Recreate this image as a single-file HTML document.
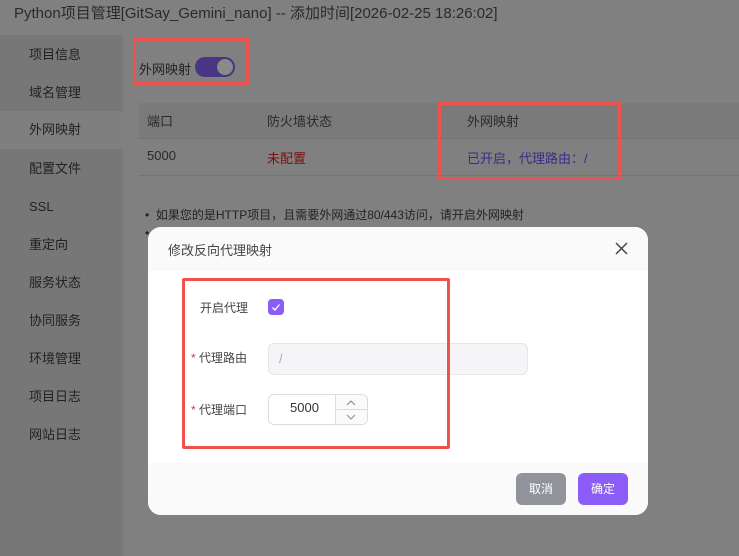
<!DOCTYPE html><html><head><meta charset="utf-8"><style>
*{box-sizing:border-box;margin:0;padding:0}
body{width:739px;height:556px;overflow:hidden;background:#808080;font-family:"Liberation Sans","Noto Sans CJK SC",sans-serif;font-size:12px;color:#333;position:relative}
.a{position:absolute}
.title{left:14px;top:2px;font-size:15px;color:#2a2a2a}
.side{left:0;top:35px;width:123px;height:521px;background:#777}
.si{position:absolute;left:0;width:123px;height:38px;line-height:38px;padding-left:29px;font-size:13px;color:#222}
.red{border:3px solid #f05050;border-radius:2px;position:absolute}
</style></head><body>
<div class="a title">Python项目管理[GitSay_Gemini_nano] -- 添加时间[2026-02-25 18:26:02]</div>
<div class="a side">
<div class="si" style="top:1px">项目信息</div>
<div class="si" style="top:39px">域名管理</div>
<div class="si" style="top:76px;background:#7f7f7f">外网映射</div>
<div class="si" style="top:115px">配置文件</div>
<div class="si" style="top:153px">SSL</div>
<div class="si" style="top:191px">重定向</div>
<div class="si" style="top:229px">服务状态</div>
<div class="si" style="top:267px">协同服务</div>
<div class="si" style="top:305px">环境管理</div>
<div class="si" style="top:343px">项目日志</div>
<div class="si" style="top:381px">网站日志</div>
</div>
<div class="a" style="left:139px;top:59px;font-size:13px;color:#222">外网映射</div>
<div class="a" style="left:195px;top:57px;width:40px;height:20px;border-radius:10px;background:#4a3484"></div>
<div class="a" style="left:217px;top:59px;width:16px;height:16px;border-radius:50%;background:#8a8a8a"></div>
<div class="red" style="left:133px;top:38px;width:116px;height:47px"></div>
<div class="a" style="left:139px;top:103px;width:600px;height:36px;background:#7a7a7a;border-bottom:1px solid #747474"></div>
<div class="a" style="left:147px;top:111px;font-size:13px;color:#2a2a2a">端口</div>
<div class="a" style="left:267px;top:111px;font-size:13px;color:#2a2a2a">防火墙状态</div>
<div class="a" style="left:467px;top:111px;font-size:13px;color:#2a2a2a">外网映射</div>
<div class="a" style="left:139px;top:175px;width:600px;height:1px;background:#747474"></div>
<div class="a" style="left:147px;top:148px;font-size:13px;color:#2a2a2a">5000</div>
<div class="a" style="left:267px;top:148px;font-size:13px;color:#7a1010">未配置</div>
<div class="a" style="left:467px;top:148px;font-size:13px;color:#3d2a8a">已开启，代理路由：/</div>
<div class="red" style="left:438px;top:102px;width:183px;height:78px"></div>
<div class="a" style="left:145px;top:206px;font-size:12px;color:#222">•&nbsp; 如果您的是HTTP项目，且需要外网通过80/443访问，请开启外网映射</div>
<div class="a" style="left:145px;top:226px;font-size:12px;color:#222">•</div>
<div class="a" style="left:148px;top:227px;width:500px;height:288px;background:#fff;border-radius:13px;overflow:hidden">
<div class="a" style="left:0;top:0;width:500px;height:44px;background:#fafafa"></div>
<div class="a" style="left:20px;top:13px;font-size:13px;color:#444">修改反向代理映射</div>
<svg class="a" style="left:467px;top:15px" width="13" height="13"><path d="M1 1L12 12M12 1L1 12" stroke="#444" stroke-width="1.5"/></svg>
<div class="a" style="left:0;top:236px;width:500px;height:52px;background:#fafafa"></div>
<div class="a" style="left:52px;top:72px;font-size:12px;color:#444">开启代理</div>
<div class="a" style="left:120px;top:72px;width:16px;height:16px;border-radius:4px;background:#8b5cf6"></div>
<svg class="a" style="left:120px;top:72px" width="16" height="16"><path d="M4.5 8.5L7 11L11.5 5.5" stroke="#fff" stroke-width="1.3" fill="none"/></svg>
<div class="a" style="left:43px;top:122px;font-size:12px;color:#444"><span style="color:#e33">*</span> 代理路由</div>
<div class="a" style="left:120px;top:116px;width:260px;height:32px;border:1px solid #e6e6e6;border-radius:6px;background:#f5f5f7;padding:7px 10px;color:#aaa;font-size:13px">/</div>
<div class="a" style="left:43px;top:174px;font-size:12px;color:#444"><span style="color:#e33">*</span> 代理端口</div>
<div class="a" style="left:120px;top:167px;width:100px;height:31px;border:1px solid #dcdcdc;border-radius:6px;background:#fff"></div>
<div class="a" style="left:142px;top:173px;font-size:13px;color:#333">5000</div>
<div class="a" style="left:187px;top:168px;width:32px;height:29px;border-left:1px solid #ddd;background:#fafafa;border-radius:0 6px 6px 0"></div>
<div class="a" style="left:188px;top:182px;width:31px;height:1px;background:#ddd"></div>
<svg class="a" style="left:198px;top:172px" width="10" height="8"><path d="M1 6L5 2L9 6" stroke="#888" fill="none"/></svg>
<svg class="a" style="left:198px;top:186px" width="10" height="8"><path d="M1 2L5 6L9 2" stroke="#888" fill="none"/></svg>
<div class="a" style="left:368px;top:246px;width:50px;height:32px;border-radius:6px;background:#909399;color:#fff;font-size:12px;text-align:center;line-height:32px">取消</div>
<div class="a" style="left:430px;top:246px;width:50px;height:32px;border-radius:6px;background:#8b5cf6;color:#fff;font-size:12px;text-align:center;line-height:32px">确定</div>
</div>
<div class="red" style="left:182px;top:278px;width:268px;height:171px"></div>
</body></html>
